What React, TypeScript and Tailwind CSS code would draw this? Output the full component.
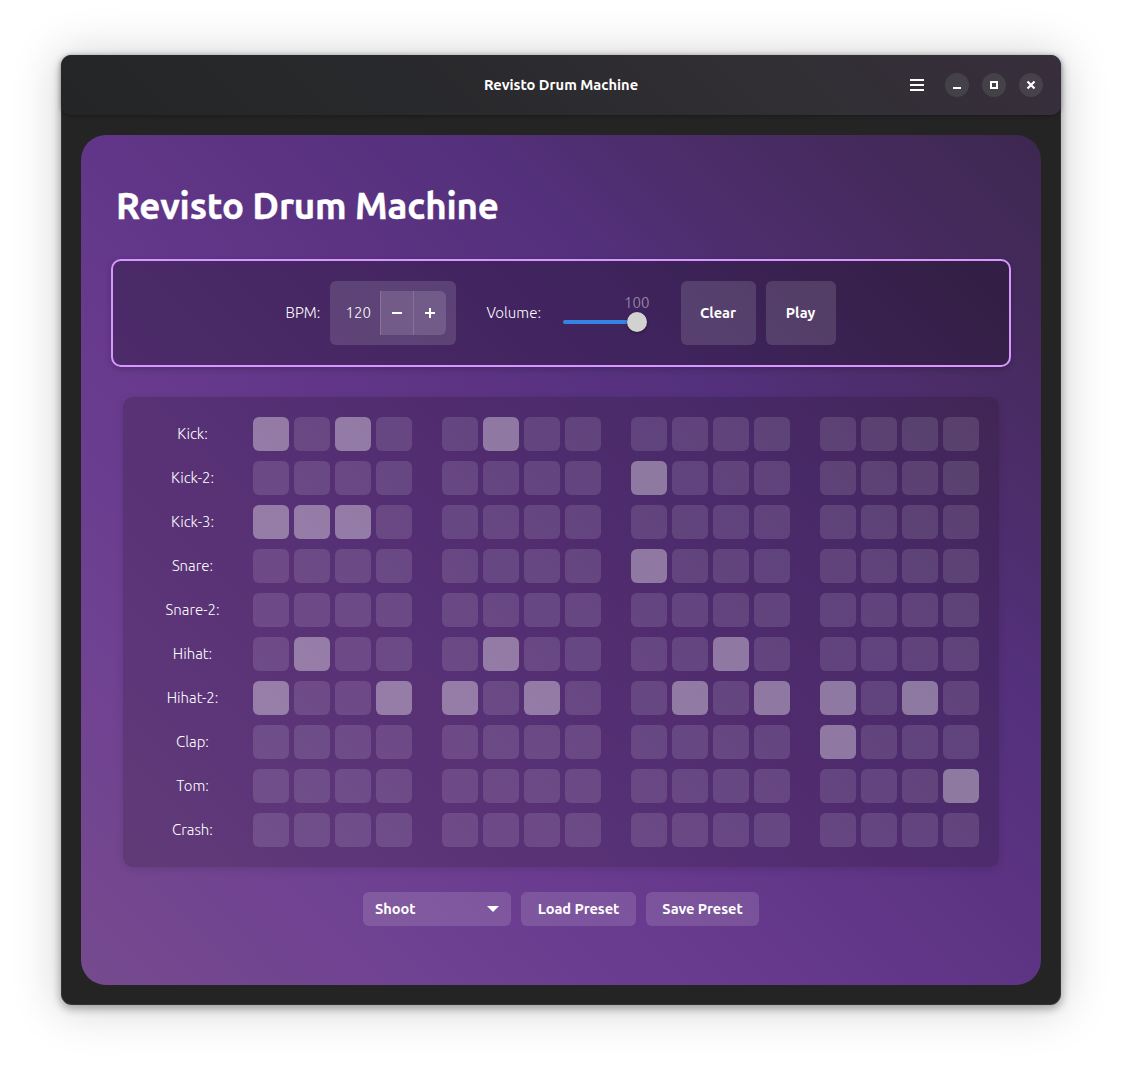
import React from 'react';

type Track = { name: string; steps: string };

const tracks: Track[] = [
  { name: 'Kick', steps: 'x.x. .x.. .... ....' },
  { name: 'Kick-2', steps: '.... .... x... ....' },
  { name: 'Kick-3', steps: 'xxx. .... .... ....' },
  { name: 'Snare', steps: '.... .... x... ....' },
  { name: 'Snare-2', steps: '.... .... .... ....' },
  { name: 'Hihat', steps: '.x.. .x.. ..x. ....' },
  { name: 'Hihat-2', steps: 'x..x x.x. .x.x x.x.' },
  { name: 'Clap', steps: '.... .... .... x...' },
  { name: 'Tom', steps: '.... .... .... ...x' },
  { name: 'Crash', steps: '.... .... .... ....' },
];

function HeaderBar() {
  return (
    <header className="relative flex h-[60px] items-center justify-end rounded-[10px] bg-[linear-gradient(45deg,#242526_0%,#26282a_25%,#2c2b2f_50%,#322f35_75%,#382e3c_100%)] pr-[18px] shadow-[0_1px_4px_rgba(0,0,0,0.3)]">
      <div className="pointer-events-none absolute inset-0 flex items-center justify-center font-semibold text-white">
        Revisto Drum Machine
      </div>
      <button className="mr-[21px] flex h-6 w-[14px] items-center" aria-label="Menu">
        <svg width="14" height="12" viewBox="0 0 14 12" fill="#fff">
          <path d="M0 0h14v2H0zM0 5h14v2H0zM0 10h14v2H0z" />
        </svg>
      </button>
      <div className="flex gap-[13px]">
        <button className="flex size-6 items-center justify-center rounded-full bg-[#454148]" aria-label="Minimize">
          <svg width="16" height="16" viewBox="0 0 16 16" fill="#fff">
            <path d="M4 10h8v2H4z" />
          </svg>
        </button>
        <button className="flex size-6 items-center justify-center rounded-full bg-[#454148]" aria-label="Maximize">
          <svg width="16" height="16" viewBox="0 0 16 16" fill="none" stroke="#fff" strokeWidth="2">
            <path d="M5 5h6v6H5z" />
          </svg>
        </button>
        <button className="flex size-6 items-center justify-center rounded-full bg-[#46414a]" aria-label="Close">
          <svg width="16" height="16" viewBox="0 0 16 16" fill="none" stroke="#fff" strokeWidth="2.2">
            <path d="M4.5 4.5l7 7M11.5 4.5l-7 7" />
          </svg>
        </button>
      </div>
    </header>
  );
}

function SpinButton() {
  return (
    <div className="ml-[9px] flex h-16 w-[126px] items-center rounded-[6px] bg-white/[0.13] pr-[10px]">
      <span className="w-[50px] pl-4">120</span>
      <div className="flex h-11 flex-1 overflow-hidden rounded-r-[6px] bg-white/[0.13]">
        <button className="flex flex-1 items-center justify-center border-l border-white/15" aria-label="Decrease">
          <svg width="10" height="10" viewBox="0 0 10 10" fill="#fff">
            <path d="M0 4h10v2H0z" />
          </svg>
        </button>
        <button className="flex flex-1 items-center justify-center border-l border-white/15" aria-label="Increase">
          <svg width="10" height="10" viewBox="0 0 10 10" fill="#fff">
            <path d="M0 4h10v2H0zM4 0h2v10H4z" />
          </svg>
        </button>
      </div>
    </div>
  );
}

function VolumeScale() {
  return (
    <div className="ml-[21px] mr-[34px] flex h-16 w-[84px] flex-col pt-3">
      <span className="h-[19px] w-[84px] translate-x-[3px] text-right leading-5 text-white/50">100</span>
      <div className="flex h-5 items-center">
        <div className="h-1 flex-1 rounded-l-full bg-[#3584e4]" />
        <div className="size-5 rounded-full bg-[#d2d2d2] shadow-[0_1px_3px_rgba(0,0,0,0.4)]" />
      </div>
    </div>
  );
}

function Controls() {
  return (
    <section className="mt-[29px] flex h-[108px] items-center justify-center rounded-[10px] border-2 border-[#d896ff] bg-black/25 pr-px text-[15px] font-light text-white shadow-[0_2px_6px_rgba(0,0,0,0.2)]">
      <span className="w-[35px] whitespace-nowrap">BPM:</span>
      <SpinButton />
      <span className="ml-[31px] w-[55px] whitespace-nowrap">Volume:</span>
      <VolumeScale />
      <button className="h-16 w-[75px] rounded-[6px] bg-white/[0.13] text-[14.667px] font-bold">Clear</button>
      <button className="ml-[10px] h-16 w-[70px] rounded-[6px] bg-white/[0.13] text-[14.667px] font-bold">Play</button>
    </section>
  );
}

function TrackRow({ name, steps }: Track) {
  return (
    <div className="flex h-[34px] items-center">
      <span className="w-[99px] text-center text-[15px] font-light text-white">{name}:</span>
      <div className="ml-[11px] flex gap-[30px]">
        {steps.split(' ').map((beat, b) => (
          <div key={b} className="flex gap-[5px]">
            {[...beat].map((step, s) => (
              <button
                key={s}
                aria-pressed={step === 'x'}
                className={
                  step === 'x'
                    ? 'h-[34px] w-9 rounded-[6px] bg-white/[0.37]'
                    : 'h-[34px] w-9 rounded-[6px] bg-white/[0.12]'
                }
              />
            ))}
          </div>
        ))}
      </div>
    </div>
  );
}

function PresetBar() {
  return (
    <footer className="mt-[25px] flex justify-center gap-[10px] font-bold tracking-[-0.08px] text-white">
      <button className="flex h-[34px] w-[148px] items-center justify-between rounded-[6px] bg-white/[0.13] px-3">
        Shoot
        <svg width="12" height="6" viewBox="0 0 12 6" fill="#fff">
          <path d="M0 0h12L6 6z" />
        </svg>
      </button>
      <button className="h-[34px] w-[115px] rounded-[6px] bg-white/[0.13]">Load Preset</button>
      <button className="h-[34px] w-[113px] rounded-[6px] bg-white/[0.13]">Save Preset</button>
    </footer>
  );
}

export default function App() {
  return (
    <div className="h-[1072px] w-[1122px] bg-white px-[61px] pt-[55px] font-['Ubuntu','Noto_Sans',sans-serif] text-[14.667px] leading-5">
      <div className="h-[950px] w-[1000px] rounded-[11px] bg-[#242424] shadow-[0_3px_9px_1px_rgba(0,0,0,0.3),0_2px_46px_4px_rgba(0,0,0,0.17),inset_0_0_0_1px_rgba(255,255,255,0.07)]">
        <HeaderBar />
        <main className="mx-5 mt-5 h-[850px] rounded-[25px] bg-[linear-gradient(45deg,#764a8e_0%,#6f4192_20%,#693b8f_34%,#5e3485_52%,#54307c_68%,#4b2c67_81%,#3d2850_100%)] px-[30px] pt-[47px]">
          <h1 className="pl-[5px] text-[36.667px] font-bold leading-[48px] tracking-[-0.15px] text-white [-webkit-text-stroke:0.4px_white]">Revisto Drum Machine</h1>
          <Controls />
          <section className="mx-3 mt-[30px] flex h-[470px] flex-col gap-[10px] rounded-[10px] bg-[#1e1020]/22 p-5 shadow-[0_2px_8px_rgba(0,0,0,0.12)]">
            {tracks.map((track) => (
              <TrackRow key={track.name} {...track} />
            ))}
          </section>
          <PresetBar />
        </main>
      </div>
    </div>
  );
}
